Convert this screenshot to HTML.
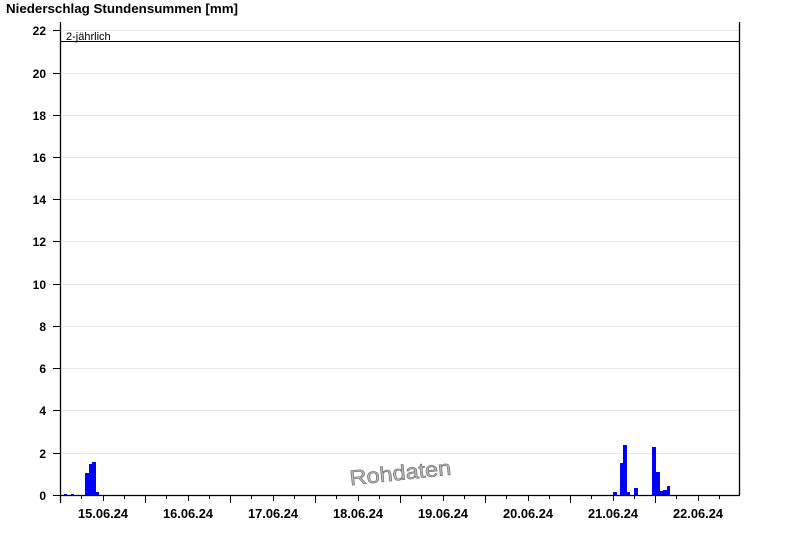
<!DOCTYPE html>
<html><head><meta charset="utf-8"><style>
html,body{margin:0;padding:0;background:#fff;}
svg{display:block;font-family:"Liberation Sans",Arial,sans-serif;}
</style></head><body>
<svg width="800" height="550" viewBox="0 0 800 550" xmlns="http://www.w3.org/2000/svg">
<rect width="800" height="550" fill="#fff"/>
<text x="6" y="13" font-size="12.5" font-weight="bold" fill="#000" textLength="232" lengthAdjust="spacingAndGlyphs">Niederschlag Stundensummen [mm]</text>
<g stroke="#e8e8e8" stroke-width="1">
<line x1="61" y1="30.5" x2="739" y2="30.5"/>
<line x1="61" y1="73.5" x2="739" y2="73.5"/>
<line x1="61" y1="115.5" x2="739" y2="115.5"/>
<line x1="61" y1="157.5" x2="739" y2="157.5"/>
<line x1="61" y1="199.5" x2="739" y2="199.5"/>
<line x1="61" y1="241.5" x2="739" y2="241.5"/>
<line x1="61" y1="284.5" x2="739" y2="284.5"/>
<line x1="61" y1="326.5" x2="739" y2="326.5"/>
<line x1="61" y1="368.5" x2="739" y2="368.5"/>
<line x1="61" y1="410.5" x2="739" y2="410.5"/>
<line x1="61" y1="453.5" x2="739" y2="453.5"/>
</g>
<g font-size="12" font-weight="bold" text-anchor="end" fill="#000">
<text x="46" y="35">22</text><text x="46" y="78">20</text><text x="46" y="120">18</text>
<text x="46" y="162">16</text><text x="46" y="204">14</text><text x="46" y="246">12</text>
<text x="46" y="289">10</text><text x="46" y="331">8</text><text x="46" y="373">6</text>
<text x="46" y="415">4</text><text x="46" y="458">2</text><text x="46" y="500">0</text>
</g>
<g stroke="#000" stroke-width="1">
<line x1="53" y1="30.5" x2="60" y2="30.5"/><line x1="53" y1="73.5" x2="60" y2="73.5"/>
<line x1="53" y1="115.5" x2="60" y2="115.5"/><line x1="53" y1="157.5" x2="60" y2="157.5"/>
<line x1="53" y1="199.5" x2="60" y2="199.5"/><line x1="53" y1="241.5" x2="60" y2="241.5"/>
<line x1="53" y1="284.5" x2="60" y2="284.5"/><line x1="53" y1="326.5" x2="60" y2="326.5"/>
<line x1="53" y1="368.5" x2="60" y2="368.5"/><line x1="53" y1="410.5" x2="60" y2="410.5"/>
<line x1="53" y1="453.5" x2="60" y2="453.5"/><line x1="53" y1="495.5" x2="60" y2="495.5"/>
</g>
<text x="349" y="480" font-size="21" fill="#bbb" stroke="#666" stroke-width="0.6" textLength="102" lengthAdjust="spacingAndGlyphs" transform="rotate(-6 400 470)">Rohdaten</text>
<g fill="#0000ff">
<rect x="64" y="494" width="3" height="1"/><rect x="71" y="494" width="3" height="1"/>
<rect x="85" y="473" width="4" height="22"/><rect x="89" y="464" width="3" height="31"/>
<rect x="92" y="462" width="4" height="33"/><rect x="96" y="492" width="3" height="3"/>
<rect x="613" y="492" width="4" height="3"/><rect x="620" y="463" width="3" height="32"/>
<rect x="623" y="445" width="4" height="50"/><rect x="627" y="492" width="3" height="3"/>
<rect x="634" y="488" width="4" height="7"/>
<rect x="652" y="447" width="4" height="48"/><rect x="656" y="472" width="4" height="23"/>
<rect x="660" y="491" width="3" height="4"/><rect x="663" y="490" width="4" height="5"/>
<rect x="667" y="486" width="3" height="9"/>
</g>
<line x1="60" y1="41.5" x2="740" y2="41.5" stroke="#000" stroke-width="1"/>
<text x="66" y="40" font-size="11" fill="#000">2-jährlich</text>
<g stroke="#000" stroke-width="1.3">
<line x1="60.5" y1="22" x2="60.5" y2="503"/>
<line x1="739.5" y1="22" x2="739.5" y2="495"/>
<line x1="60" y1="495.5" x2="740" y2="495.5"/>
</g>
<g stroke="#000" stroke-width="1">
<line x1="81.5" y1="495" x2="81.5" y2="499"/><line x1="103.5" y1="495" x2="103.5" y2="501"/><line x1="124.5" y1="495" x2="124.5" y2="499"/><line x1="145.5" y1="495" x2="145.5" y2="503"/>
<line x1="166.5" y1="495" x2="166.5" y2="499"/><line x1="188.5" y1="495" x2="188.5" y2="501"/><line x1="209.5" y1="495" x2="209.5" y2="499"/><line x1="230.5" y1="495" x2="230.5" y2="503"/>
<line x1="251.5" y1="495" x2="251.5" y2="499"/><line x1="273.5" y1="495" x2="273.5" y2="501"/><line x1="294.5" y1="495" x2="294.5" y2="499"/><line x1="315.5" y1="495" x2="315.5" y2="503"/>
<line x1="336.5" y1="495" x2="336.5" y2="499"/><line x1="358.5" y1="495" x2="358.5" y2="501"/><line x1="379.5" y1="495" x2="379.5" y2="499"/><line x1="400.5" y1="495" x2="400.5" y2="503"/>
<line x1="421.5" y1="495" x2="421.5" y2="499"/><line x1="443.5" y1="495" x2="443.5" y2="501"/><line x1="464.5" y1="495" x2="464.5" y2="499"/><line x1="485.5" y1="495" x2="485.5" y2="503"/>
<line x1="506.5" y1="495" x2="506.5" y2="499"/><line x1="528.5" y1="495" x2="528.5" y2="501"/><line x1="549.5" y1="495" x2="549.5" y2="499"/><line x1="570.5" y1="495" x2="570.5" y2="503"/>
<line x1="591.5" y1="495" x2="591.5" y2="499"/><line x1="613.5" y1="495" x2="613.5" y2="501"/><line x1="634.5" y1="495" x2="634.5" y2="499"/><line x1="655.5" y1="495" x2="655.5" y2="503"/>
<line x1="676.5" y1="495" x2="676.5" y2="499"/><line x1="698.5" y1="495" x2="698.5" y2="501"/><line x1="719.5" y1="495" x2="719.5" y2="499"/>
</g>
<g font-size="12.5" font-weight="bold" fill="#000">
<text x="78" y="518" textLength="50" lengthAdjust="spacingAndGlyphs">15.06.24</text>
<text x="163" y="518" textLength="50" lengthAdjust="spacingAndGlyphs">16.06.24</text>
<text x="248" y="518" textLength="50" lengthAdjust="spacingAndGlyphs">17.06.24</text>
<text x="333" y="518" textLength="50" lengthAdjust="spacingAndGlyphs">18.06.24</text>
<text x="418" y="518" textLength="50" lengthAdjust="spacingAndGlyphs">19.06.24</text>
<text x="503" y="518" textLength="50" lengthAdjust="spacingAndGlyphs">20.06.24</text>
<text x="588" y="518" textLength="50" lengthAdjust="spacingAndGlyphs">21.06.24</text>
<text x="673" y="518" textLength="50" lengthAdjust="spacingAndGlyphs">22.06.24</text>
</g>
</svg>
</body></html>
